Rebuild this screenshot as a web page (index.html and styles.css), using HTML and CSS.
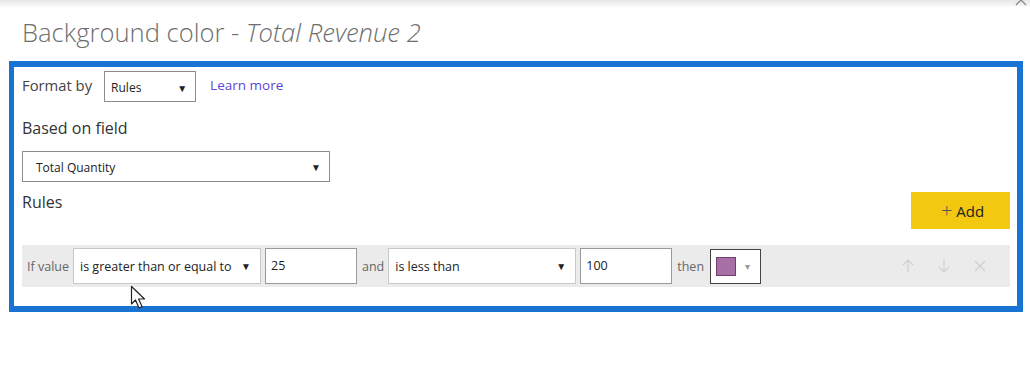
FILE: index.html
```html
<!DOCTYPE html>
<html lang="en">
<head>
    <meta charset="UTF-8">
    <title>Background color</title>
    <link rel="stylesheet" href="styles.css">
</head>
<body>
    <div class="dialog">
        <div class="top-strip">
            <svg class="close-icon" width="14" height="14" viewBox="0 0 14 14">
                <path d="M2 2 L12 12 M12 2 L2 12" stroke="#888" stroke-width="1.3" fill="none"/>
            </svg>
        </div>
        <h1 class="title">Background color - <em>Total Revenue 2</em></h1>

        <div class="panel">
            <div class="format-row">
                <span class="label">Format by</span>
                <div class="select select-small">
                    <span>Rules</span>
                    <span class="caret">&#9660;</span>
                </div>
                <a class="learn-more" href="#">Learn more</a>
            </div>

            <div class="section-title">Based on field</div>
            <div class="select select-field">
                <span>Total Quantity</span>
                <span class="caret">&#9660;</span>
            </div>

            <div class="rules-head">
                <div class="section-title">Rules</div>
                <button class="add-button"><span class="plus">+</span> Add</button>
            </div>

            <div class="rule-row">
                <span class="row-label">If value</span>
                <div class="select select-rule">
                    <span>is greater than or equal to</span>
                    <span class="caret">&#9660;</span>
                </div>
                <div class="value-input">25</div>
                <span class="row-label">and</span>
                <div class="select select-rule">
                    <span>is less than</span>
                    <span class="caret">&#9660;</span>
                </div>
                <div class="value-input">100</div>
                <span class="row-label">then</span>
                <div class="color-picker">
                    <span class="swatch"></span>
                    <span class="picker-caret">&#9662;</span>
                </div>
                <div class="row-actions">
                    <svg width="16" height="16" viewBox="0 0 16 16">
                        <path d="M8 14 V2 M3 7 L8 2 L13 7" stroke="#cfcfcf" stroke-width="1.2" fill="none"/>
                    </svg>
                    <svg width="16" height="16" viewBox="0 0 16 16">
                        <path d="M8 2 V14 M3 9 L8 14 L13 9" stroke="#cfcfcf" stroke-width="1.2" fill="none"/>
                    </svg>
                    <svg width="16" height="16" viewBox="0 0 16 16">
                        <path d="M3 3 L13 13 M13 3 L3 13" stroke="#cfcfcf" stroke-width="1.2" fill="none"/>
                    </svg>
                </div>
            </div>

            <svg class="cursor" width="20" height="26" viewBox="0 0 20 26">
                <path d="M1.5 1.5 L1.5 19 L5.5 15 L9 23 L12 21.6 L8.6 14 L14.5 14 Z" fill="#fff" stroke="#222" stroke-width="1.2" stroke-linejoin="round"/>
            </svg>
        </div>
    </div>
</body>
</html>
```

FILE: styles.css
```css
body {
    margin: 0;
    background-color: white;
    font-family: 'Open Sans', 'Noto Sans', sans-serif;
    color: #333;
}

.dialog {
    width: 1030px;
    height: 378px;
    overflow: hidden;
}

.top-strip {
    position: relative;
    height: 7px;
    background: linear-gradient(#e6e6e6, #fbfbfb);
}

.close-icon {
    position: absolute;
    right: 2px;
    top: -7px;
}

.title {
    margin: 11px 0 0 22px;
    font-size: 25.6px;
    font-weight: 300;
    color: #6e6e6e;
    line-height: 30px;
    letter-spacing: 0;
}

.title em {
    font-style: italic;
}

.panel {
    position: relative;
    margin: 13px 7px 0 9px;
    border: 5px solid #1873d3;
    border-width: 6px 6px 6px 5px;
    padding: 4px 7px 19px 8px;
}

.format-row {
    display: flex;
    align-items: center;
    height: 31px;
}

.label {
    font-size: 14.8px;
    color: #444;
    margin-right: 12px;
    margin-top: -3px;
}

.select {
    display: flex;
    align-items: center;
    justify-content: space-between;
    box-sizing: border-box;
    background: white;
    border: 1px solid #8c8c8c;
    font-size: 12px;
    color: #222;
}

.select-small {
    width: 92px;
    height: 31px;
    padding: 2px 8px 0 6px;
}

.caret {
    font-size: 10px;
    color: #222;
}

.learn-more {
    margin-left: 14px;
    margin-top: -3px;
    font-size: 13.5px;
    color: #5b46d6;
    text-decoration: none;
}

.section-title {
    font-size: 16px;
    color: #333;
    line-height: 22px;
}

.format-row + .section-title {
    margin-top: 15px;
}

.select-field {
    width: 308px;
    height: 31px;
    margin-top: 12px;
    padding: 1px 8px 0 13px;
}

.rules-head {
    display: flex;
    justify-content: space-between;
    align-items: flex-start;
    margin-top: 9px;
}

.add-button {
    margin-top: 1px;
    width: 99px;
    height: 37px;
    border: none;
    background-color: #f2c811;
    font-family: 'Open Sans', 'Noto Sans', sans-serif;
    font-size: 15px;
    color: #222;
    padding: 0 0 0 4px;
}

.plus {
    font-size: 20px;
    font-weight: 300;
    color: #555;
    vertical-align: -1px;
}

.rule-row {
    display: flex;
    align-items: center;
    height: 42px;
    margin-top: 16px;
    padding-left: 5px;
    background-color: #ebebeb;
}

.row-label {
    font-size: 12.5px;
    color: #666;
    margin-right: 4px;
}

.select-rule {
    width: 188px;
    height: 36px;
    border-color: #c8c8c8;
    font-size: 12.5px;
    padding: 0 9px 0 6px;
    margin-right: 4px;
}

.value-input {
    box-sizing: border-box;
    width: 92px;
    height: 36px;
    line-height: 34px;
    padding-left: 5px;
    border: 1px solid #9a9a9a;
    background: white;
    font-size: 12.5px;
    color: #222;
    margin-right: 5px;
}

.color-picker {
    display: flex;
    align-items: center;
    box-sizing: border-box;
    width: 51px;
    height: 35px;
    margin-left: 2px;
    padding-left: 5px;
    border: 1px solid #444;
    background: white;
}

.swatch {
    width: 18px;
    height: 17px;
    background-color: #a86ea6;
    border: 1px solid #6a3f69;
}

.picker-caret {
    margin-left: 9px;
    font-size: 10px;
    color: #999;
}

.row-actions {
    display: flex;
    gap: 20px;
    margin-left: auto;
    margin-right: 22px;
}

.cursor {
    position: absolute;
    left: 116px;
    top: 218px;
}
```
